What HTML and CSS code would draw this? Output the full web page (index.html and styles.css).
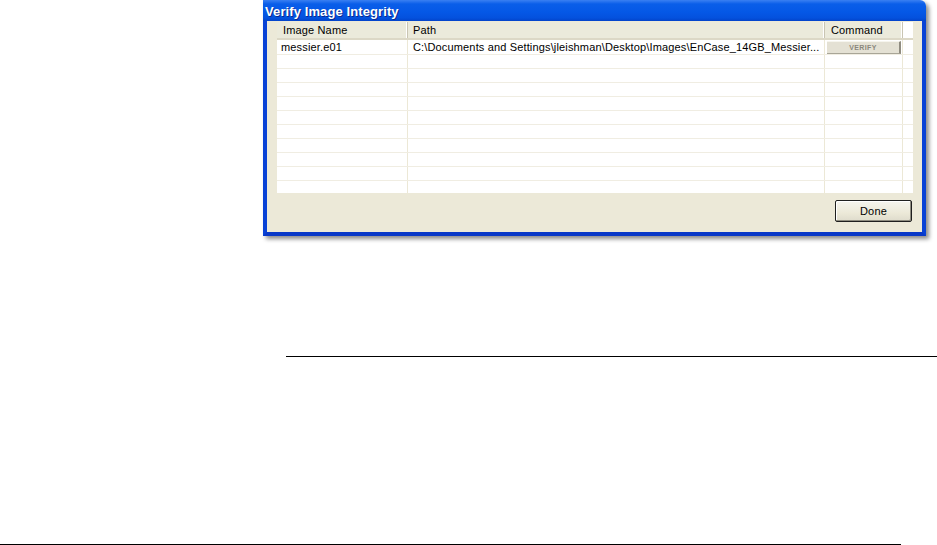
FILE: index.html
```html
<!DOCTYPE html>
<html>
<head>
<meta charset="utf-8">
<link rel="stylesheet" href="styles.css">
</head>
<body>
<div class="page">
  <div class="window">
    <div class="titlebar">Verify Image Integrity</div>
    <div class="body">
      <div class="grid">
        <div class="hrow">
          <div class="hcell c1">Image Name</div>
          <div class="hcell c2">Path</div>
          <div class="hcell c3">Command</div>
          <div class="hcell c4"></div>
        </div>
        <div class="row">
          <div class="cell c1">messier.e01</div>
          <div class="cell c2">C:\Documents and Settings\jleishman\Desktop\Images\EnCase_14GB_Messier...</div>
          <div class="cell c3"><span class="verify">VERIFY</span></div>
          <div class="cell c4"></div>
        </div>
        <div class="row"><div class="cell c1"></div><div class="cell c2"></div><div class="cell c3"></div><div class="cell c4"></div></div>
        <div class="row"><div class="cell c1"></div><div class="cell c2"></div><div class="cell c3"></div><div class="cell c4"></div></div>
        <div class="row"><div class="cell c1"></div><div class="cell c2"></div><div class="cell c3"></div><div class="cell c4"></div></div>
        <div class="row"><div class="cell c1"></div><div class="cell c2"></div><div class="cell c3"></div><div class="cell c4"></div></div>
        <div class="row"><div class="cell c1"></div><div class="cell c2"></div><div class="cell c3"></div><div class="cell c4"></div></div>
        <div class="row"><div class="cell c1"></div><div class="cell c2"></div><div class="cell c3"></div><div class="cell c4"></div></div>
        <div class="row"><div class="cell c1"></div><div class="cell c2"></div><div class="cell c3"></div><div class="cell c4"></div></div>
        <div class="row"><div class="cell c1"></div><div class="cell c2"></div><div class="cell c3"></div><div class="cell c4"></div></div>
        <div class="row"><div class="cell c1"></div><div class="cell c2"></div><div class="cell c3"></div><div class="cell c4"></div></div>
        <div class="row"><div class="cell c1"></div><div class="cell c2"></div><div class="cell c3"></div><div class="cell c4"></div></div>
      </div>
      <div class="footer">
        <button class="done">Done</button>
      </div>
    </div>
  </div>
  <div class="rule rule1"></div>
  <div class="rule rule2"></div>
</div>
</body>
</html>
```

FILE: styles.css
```css
html, body {
  margin: 0;
  padding: 0;
  background: #ffffff;
}
.page {
  width: 937px;
  height: 545px;
  overflow: hidden;
  font-family: "Liberation Sans", Arial, sans-serif;
  font-size: 11px;
  letter-spacing: 0.15px;
  color: #000;
}
.window {
  margin-left: 263px;
  width: 663px;
  height: 236px;
  border-radius: 0 6px 0 0;
  box-shadow: 3px 3px 4px rgba(0, 0, 0, 0.45);
  display: flex;
  flex-direction: column;
}
.titlebar {
  height: 21px;
  box-sizing: border-box;
  padding: 5px 0 0 2px;
  line-height: 14px;
  font-size: 13px;
  font-weight: bold;
  letter-spacing: 0.1px;
  color: #ffffff;
  border-radius: 0 6px 0 0;
  background: linear-gradient(#3a80f2 0px, #0a5ee9 4px, #0558e6 12px, #0451dd 18px, #0343c9 21px);
  text-shadow: 1px 1px 0 #0a2a90;
  white-space: nowrap;
}
.body {
  flex: 1;
  background: #ece9d8;
  border-left: 4px solid #0842d6;
  border-right: 4px solid #0842d6;
  border-bottom: 4px solid #0838c8;
  padding: 1px 9px 0 10px;
  display: flex;
  flex-direction: column;
}
.grid {
  height: 171px;
  background: #ffffff;
  overflow: hidden;
  display: flex;
  flex-direction: column;
}
.hrow, .row {
  display: grid;
  grid-template-columns: 131px 417px 78px 1fr;
  flex: none;
}
.hrow {
  height: 18px;
  box-sizing: border-box;
  background: #ebeadb;
  border-bottom: 2px solid #dcd8c6;
}
.hcell {
  box-sizing: border-box;
  line-height: 16px;
  padding-left: 6px;
  border-right: 1px solid #c9c5b3;
  box-shadow: inset -1px 0 0 #ffffff;
  white-space: nowrap;
}
.hcell.c2 { padding-left: 5px; }
.hcell.c4 { border-right: 0; box-shadow: none; background: #ffffff; }
.row {
  height: 14px;
  box-sizing: border-box;
  border-bottom: 1px solid #f0ede2;
}
.row:first-of-type { }
.grid .row:nth-child(2) { height: 15px; }
.cell {
  box-sizing: border-box;
  line-height: 13px;
  padding-left: 4px;
  border-right: 1px solid #ece8d6;
  white-space: nowrap;
  overflow: hidden;
}
.grid .row:nth-child(2) .cell { line-height: 14px; }
.cell.c2 { padding-left: 5px; }
.cell.c3 { padding: 1px 1px 0 2px; }
.cell.c4 { border-right: 0; }
.verify {
  display: block;
  height: 13px;
  box-sizing: border-box;
  background: #e4e1d4;
  border-right: 2px solid #8f8c80;
  border-bottom: 1px solid #a8a597;
  border-top: 1px solid #f6f5ee;
  color: #8a877c;
  font-size: 7px;
  font-weight: bold;
  letter-spacing: 0.4px;
  line-height: 11px;
  text-align: center;
}
.footer {
  display: flex;
  justify-content: flex-end;
  padding: 7px 1px 0 0;
}
.done {
  width: 77px;
  height: 22px;
  box-sizing: border-box;
  margin: 0;
  padding: 0;
  font-family: "Liberation Sans", Arial, sans-serif;
  font-size: 11px;
  letter-spacing: 0.2px;
  color: #000;
  background: linear-gradient(#f5f4ee, #ece9d8 60%, #dedbcc);
  border: 1px solid #1f1f1f;
  border-radius: 2px;
  box-shadow: inset -1px -1px 0 #8e8c80, inset 1px 1px 0 #ffffff;
}
.rule {
  height: 1px;
  background: #000;
}
.rule1 {
  margin-top: 120px;
  margin-left: 286px;
}
.rule2 {
  margin-top: 187px;
  width: 901px;
}
```
